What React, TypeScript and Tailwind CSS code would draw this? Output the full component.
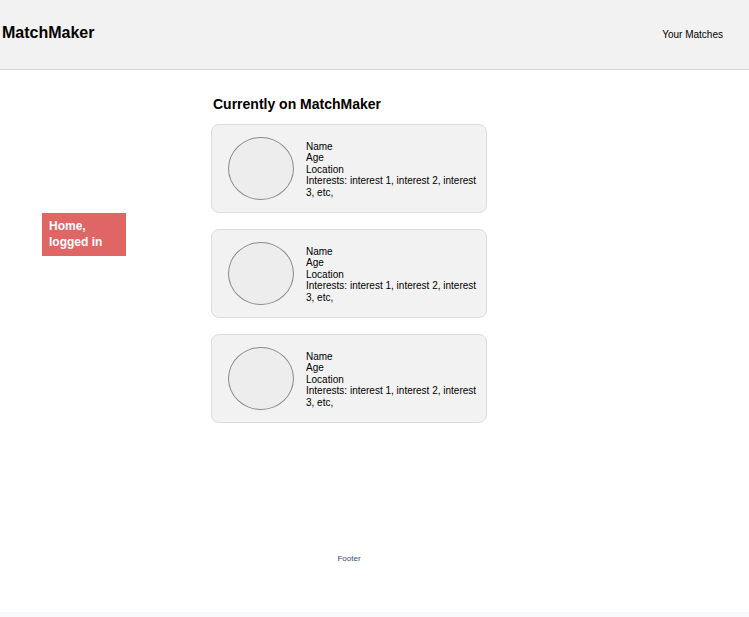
const people = [1, 2, 3];

const ProfileCard = () => (
  <li className="flex h-[89px] items-center rounded-lg border border-[#dcdcdc] bg-[#f2f2f2] pl-4 pr-2">
    <div className="h-[63px] w-[66px] shrink-0 rounded-[50%] border border-[#8a8a8a] bg-[#ededed]" />
    <div className="ml-3 mt-[2px] flex-1 text-[10px] leading-[11.5px] text-black">
      <p>Name</p>
      <p>Age</p>
      <p>Location</p>
      <p>Interests: interest 1, interest 2, interest 3, etc,</p>
    </div>
  </li>
);

const App = () => (
  <div className="min-h-screen bg-[#f8f9fb] [font-family:'Liberation_Sans',Arial,sans-serif]">
    <div className="h-[612px] bg-white">
      <header className="flex h-[70px] items-center justify-between border-b border-[#d6d6d6] bg-[#f2f2f2] pb-[4px] pl-[2px] pr-[26px]">
        <h1 className="text-[16px] font-bold text-black">MatchMaker</h1>
        <a className="mt-[4px] text-[10px] text-black">Your Matches</a>
      </header>

      <div className="flex">
        <aside className="w-[211px] shrink-0 pl-[42px] pt-[143px]">
          <div className="w-[84px] bg-[#e06666] px-[7px] pb-[6px] pt-[5px] text-[12px] font-bold leading-[16px] text-white">
            Home,
            <br />
            logged in
          </div>
        </aside>

        <main className="w-[276px]">
          <h2 className="mt-[26px] pl-[2px] text-[14px] font-bold leading-[16px] text-black">
            Currently on MatchMaker
          </h2>
          <ul className="mt-[12px] flex flex-col gap-4">
            {people.map((n) => (
              <ProfileCard key={n} />
            ))}
          </ul>
          <footer className="mt-[130px] text-center text-[8px] text-[#3a4a6e]">
            Footer
          </footer>
        </main>
      </div>
    </div>
  </div>
);

export default App;
